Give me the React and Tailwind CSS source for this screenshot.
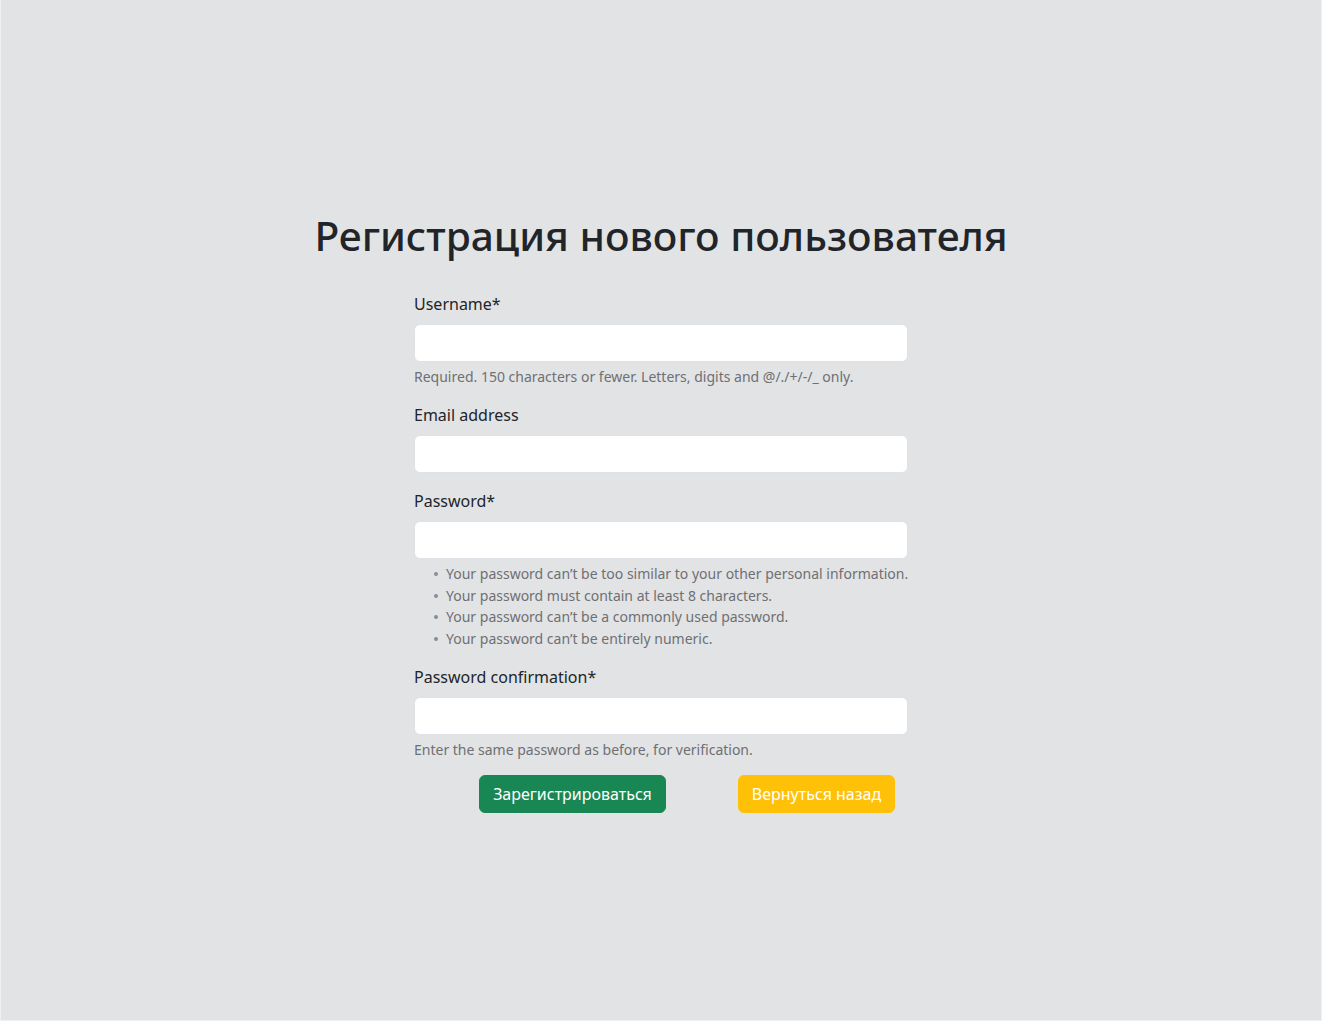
import React from "react";

const font = { fontFamily: '"Noto Sans", "Liberation Sans", sans-serif' };

function Field({ label, help, type = "text" }) {
  return (
    <div className="mb-4">
      <label className="block text-[16px] leading-[24px] mb-2 text-[#212529]">{label}</label>
      <input type={type} className="block w-full h-[38px] bg-white border border-[#dee2e6] rounded-[6px] px-3 outline-none" />
      {help}
    </div>
  );
}

const tips = [
  "Your password can’t be too similar to your other personal information.",
  "Your password must contain at least 8 characters.",
  "Your password can’t be a commonly used password.",
  "Your password can’t be entirely numeric.",
];

export default function App() {
  return (
    <div
      className="w-full h-[1021px] bg-[#e2e3e5] border-l border-r border-b border-[#eff0f1] pt-[213px] text-[#212529]"
      style={font}
    >
      <h1 className="text-center text-[40.7px] leading-[44px] font-medium mb-[35px]">
        Регистрация нового пользователя
      </h1>
      <form className="w-[494px] mx-auto">
        <Field
          label="Username*"
          help={
            <div className="mt-1 text-[14px] leading-[21px] text-[#6e7073]">
              Required. 150 characters or fewer. Letters, digits and @/./+/-/_ only.
            </div>
          }
        />
        <Field label="Email address" type="email" />
        <div className="mb-4">
          <label className="block text-[16px] leading-[24px] mb-2">Password*</label>
          <input type="password" className="block w-full h-[38px] bg-white border border-[#dee2e6] rounded-[6px] px-3 outline-none" />
          <ul className="mt-1 text-[14px] leading-[21.5px] text-[#6e7073] whitespace-nowrap">
            {tips.map((t) => (
              <li key={t} className="flex items-center">
                <span className="shrink-0 w-[4px] h-[4px] rounded-full bg-[#8a8c8f] ml-[20px] mr-[8px] mt-[1px]" />
                <span>{t}</span>
              </li>
            ))}
          </ul>
        </div>
        <Field
          label="Password confirmation*"
          type="password"
          help={
            <div className="mt-1 text-[14px] leading-[21px] text-[#6e7073]">
              Enter the same password as before, for verification.
            </div>
          }
        />
        <div className="flex pl-[65px] gap-[72px] -mt-px">
          <button type="button" className="w-[187px] h-[38px] rounded-[6px] border border-[#198754] bg-[#198754] text-white text-[16px] leading-[24px]">
            Зарегистрироваться
          </button>
          <button type="button" className="w-[157px] h-[38px] rounded-[6px] border border-[#ffc107] bg-[#ffc107] text-white text-[16px] leading-[24px]">
            Вернуться назад
          </button>
        </div>
      </form>
    </div>
  );
}
